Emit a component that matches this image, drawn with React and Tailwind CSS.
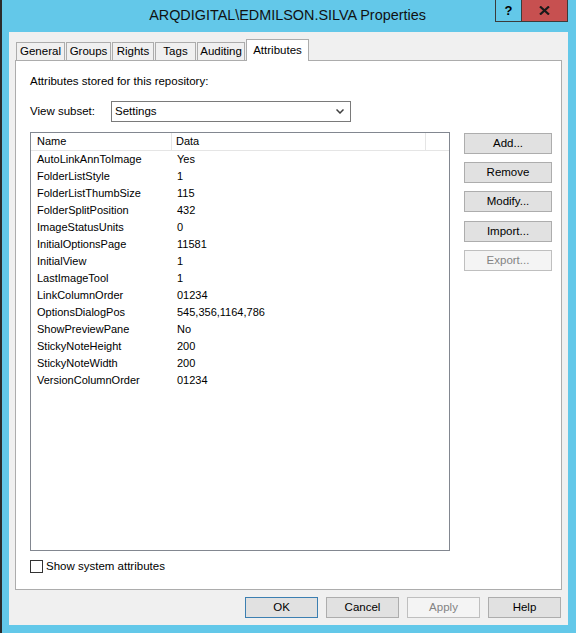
import React from "react";

const rows = [
  ["AutoLinkAnnToImage", "Yes"],
  ["FolderListStyle", "1"],
  ["FolderListThumbSize", "115"],
  ["FolderSplitPosition", "432"],
  ["ImageStatusUnits", "0"],
  ["InitialOptionsPage", "11581"],
  ["InitialView", "1"],
  ["LastImageTool", "1"],
  ["LinkColumnOrder", "01234"],
  ["OptionsDialogPos", "545,356,1164,786"],
  ["ShowPreviewPane", "No"],
  ["StickyNoteHeight", "200"],
  ["StickyNoteWidth", "200"],
  ["VersionColumnOrder", "01234"],
];

const tabs = [
  { label: "General", w: "w-[49px]" },
  { label: "Groups", w: "w-[45px]" },
  { label: "Rights", w: "w-[42px]" },
  { label: "Tags", w: "w-[41px]" },
  { label: "Auditing", w: "w-[48px]" },
];

const ui = { fontFamily: '"Liberation Sans", Arial, sans-serif' };

const SideButton = ({ children, disabled }) => (
  <button
    className={`h-[21px] w-[88px] border text-[11.5px] ${
      disabled
        ? "border-[#bfbfbf] bg-[#f4f4f4] text-[#838383]"
        : "border-[#adadad] bg-[#e1e1e1] text-black"
    }`}
  >
    {children}
  </button>
);

const FooterButton = ({ children, disabled, primary }) => (
  <button
    className={`h-[21px] w-[73px] border text-[11.5px] ${
      disabled
        ? "border-[#bfbfbf] bg-[#f4f4f4] text-[#838383]"
        : primary
        ? "border-[#3c7fb1] bg-[#e1e1e1] text-black"
        : "border-[#adadad] bg-[#e1e1e1] text-black"
    }`}
  >
    {children}
  </button>
);

export default function App() {
  return (
    <div className="w-[576px] h-[633px] bg-[#63c8e9] flex flex-col border-l-2 border-[#2b2b2b]" style={ui}>
      {/* Title bar */}
      <div className="h-[32px] flex items-start">
        <div className="flex-1 h-[32px] flex items-center justify-center pl-[78px] text-[14.4px] text-[#111]">
          ARQDIGITAL\EDMILSON.SILVA Properties
        </div>
        <div className="flex h-[22px] mr-[8px] border border-t-0 border-[#3b3b3b]">
          <div className="w-[26px] h-full flex items-center justify-center text-[13px] font-bold border-r border-[#3b3b3b]">
            ?
          </div>
          <div className="w-[45px] h-full bg-[#c75050] flex items-center justify-center">
            <svg width="11" height="9" viewBox="0 0 11 9">
              <path d="M1 0.5 L10 8.5 M10 0.5 L1 8.5" stroke="#1a1a1a" strokeWidth="2.2" />
            </svg>
          </div>
        </div>
      </div>

      {/* Client area */}
      <div className="flex-1 ml-[7px] mr-[8px] mb-[8px] bg-[#f0f0f0] flex flex-col px-[6px] pt-[7px]">
        {/* Tabs */}
        <div className="flex items-end gap-[1px] h-[21px] pl-[1px] relative z-10 text-[11.5px]">
          {tabs.map((t) => (
            <div
              key={t.label}
              className={`${t.w} h-[18px] border border-b-0 border-[#acacac] bg-[#f0f0f0] flex items-center justify-center`}
            >
              {t.label}
            </div>
          ))}
          <div className="w-[63px] h-[22px] -mb-px border border-b-0 border-[#acacac] bg-white flex items-start justify-center pt-[2px]">
            Attributes
          </div>
        </div>

        {/* Panel */}
        <div className="h-[530px] bg-white border border-[#acacac] flex flex-col pl-[14px] pr-[9px] text-[11.5px]">
          <div className="mt-[12px] h-[16px] leading-[16px]">Attributes stored for this repository:</div>
          <div className="mt-[12px] flex items-center">
            <div className="w-[81px]">View subset:</div>
            <div className="w-[240px] h-[21px] border border-[#7a7a7a] flex items-center justify-between pl-[3px] pr-[6px]">
              <span>Settings</span>
              <svg width="8" height="5" viewBox="0 0 8 5">
                <path d="M0.5 0.5 L4 4 L7.5 0.5" stroke="#404040" strokeWidth="1.5" fill="none" />
              </svg>
            </div>
          </div>

          <div className="mt-[10px] flex gap-[14px]">
            {/* List */}
            <div className="w-[420px] h-[419px] border border-[#828790] bg-white text-[11px]">
              <div className="flex h-[18px] border-b border-[#e5e5e5]">
                <div className="w-[141px] border-r border-[#e5e5e5] pl-[6px] flex items-center">Name</div>
                <div className="w-[254px] border-r border-[#e5e5e5] pl-[4px] flex items-center">Data</div>
              </div>
              {rows.map(([name, data]) => (
                <div key={name} className="flex h-[17px] items-center">
                  <div className="w-[141px] pl-[6px]">{name}</div>
                  <div className="pl-[5px]">{data}</div>
                </div>
              ))}
            </div>

            {/* Side buttons */}
            <div className="flex flex-col gap-[8px] mt-[1px]">
              <SideButton>Add...</SideButton>
              <SideButton>Remove</SideButton>
              <SideButton>Modify...</SideButton>
              <div className="mt-[1px] flex flex-col gap-[8px]">
                <SideButton>Import...</SideButton>
                <SideButton disabled>Export...</SideButton>
              </div>
            </div>
          </div>

          <label className="mt-[7px] flex items-center gap-[3px]">
            <span className="w-[13px] h-[13px] border border-[#333] bg-white inline-block" />
            <span>Show system attributes</span>
          </label>
        </div>

        {/* Footer */}
        <div className="flex justify-end gap-[8px] mt-[7px] pr-[1px]">
          <FooterButton primary>OK</FooterButton>
          <FooterButton>Cancel</FooterButton>
          <FooterButton disabled>Apply</FooterButton>
          <FooterButton>Help</FooterButton>
        </div>
      </div>
    </div>
  );
}
